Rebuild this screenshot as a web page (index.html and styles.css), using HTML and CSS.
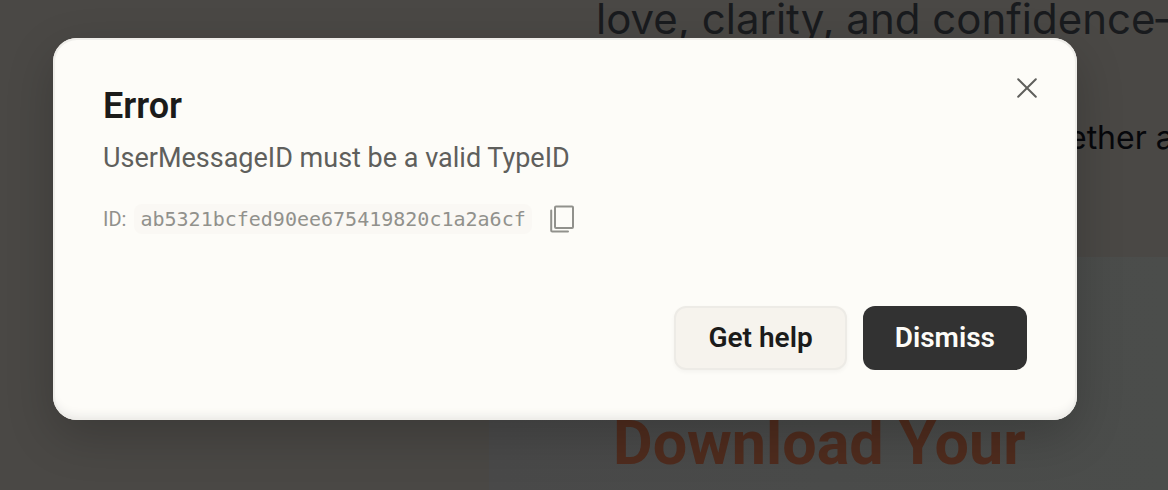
FILE: index.html
```html
<!DOCTYPE html>
<html lang="en">
<head>
<meta charset="utf-8">
<meta name="viewport" content="width=device-width, initial-scale=1">
<title>Error</title>
<link rel="stylesheet" href="styles.css">
</head>
<body>
<div class="page" aria-hidden="true">
  <div class="intro">
    <p class="lead">love, clarity, and confidence—</p>
    <p class="note">together a</p>
  </div>
  <div class="download">
    <h2 class="download-title">Download Your</h2>
  </div>
</div>
<div class="overlay">
  <section class="dialog" role="dialog" aria-modal="true" aria-labelledby="title" aria-describedby="message">
    <header class="header">
      <div class="heading">
        <h1 class="title" id="title">Error</h1>
        <p class="message" id="message">UserMessageID must be a valid TypeID</p>
      </div>
      <button class="icon-button" type="button" aria-label="Close">
        <svg width="20" height="20" viewBox="0 0 20 20" fill="none" stroke="currentColor" stroke-width="2" stroke-linecap="round"><path d="M1.2 1.2 18.8 18.8M18.8 1.2 1.2 18.8"/></svg>
      </button>
    </header>
    <div class="reference">
      <span class="label">ID:</span>
      <code class="code">ab5321bcfed90ee675419820c1a2a6cf</code>
      <button class="icon-button copy" type="button" aria-label="Copy ID">
        <svg width="24" height="28" viewBox="0 0 24 28" fill="none" stroke="currentColor" stroke-width="2" stroke-linecap="round" stroke-linejoin="round"><rect x="5" y="1.5" width="18" height="21.5" rx="1"/><path d="M1.2 5.5V25.5a1 1 0 0 0 1 1H18"/></svg>
      </button>
    </div>
    <footer class="actions">
      <button class="button secondary" type="button">Get help</button>
      <button class="button primary" type="button">Dismiss</button>
    </footer>
  </section>
</div>
</body>
</html>
```
FILE: styles.css
```css
* {
  box-sizing: border-box;
}

body {
  margin: 0;
  min-height: 100vh;
  display: grid;
  overflow: hidden;
  background: #4a4845;
  font-family: Roboto, "Liberation Sans", sans-serif;
}

h1, h2, p {
  margin: 0;
}

.page,
.overlay {
  grid-area: 1 / 1;
  min-width: 0;
}

.page {
  display: flex;
  flex-direction: column;
  gap: 95px;
  overflow: hidden;
  font-family: Inter, "Liberation Sans", sans-serif;
  white-space: nowrap;
}

.intro {
  height: 162px;
}

.lead {
  padding-left: 596px;
  color: #191b1e;
  font-size: 42px;
  line-height: 38px;
}

.note {
  padding: 80px 0 0 1019px;
  color: #06070b;
  font-size: 32px;
  line-height: 40px;
}

.download {
  flex: 1;
  margin-left: 489px;
  padding: 150px 0 0 124px;
  background: linear-gradient(90deg, #494949, #4b4d4b);
}

.download-title {
  color: #4f2c1e;
  font-family: Roboto, "Liberation Sans", sans-serif;
  font-size: 61px;
  line-height: 72px;
}

.overlay {
  position: relative;
  padding: 38px 91px 70px 53px;
}

.dialog {
  padding: 48px 50px 50px;
  border-radius: 24px;
  background: #fdfcf8;
  box-shadow: inset 0 0 0 2px #efeeea, inset 0 -8px 12px -6px #e4e3e0, 0 16px 48px rgb(0 0 0 / 20%);
}

.header {
  display: flex;
  justify-content: space-between;
  align-items: flex-start;
}

.title {
  color: #1b1b1a;
  font-size: 36px;
  font-weight: 600;
  line-height: 40px;
}

.message {
  padding-top: 14px;
  color: #5f5f5c;
  font-size: 27px;
  line-height: 36px;
}

.icon-button {
  display: flex;
  padding: 10px;
  border: 0;
  background: none;
  color: #5f5f5c;
  margin: -18px -20px 0 0;
}

.reference {
  display: flex;
  align-items: center;
  gap: 8px;
  margin-top: 28px;
  color: #91918c;
  font-size: 20px;
}

.code {
  padding: 0 6px;
  border-radius: 8px;
  background: #faf8f4;
  font-family: "DejaVu Sans Mono", monospace;
  font-size: 20px;
  line-height: 30px;
}

.copy {
  margin: 0;
  padding: 0 10px;
  color: #91918c;
}

.actions {
  display: flex;
  justify-content: flex-end;
  gap: 16px;
  margin-top: 72px;
}

.button {
  height: 64px;
  padding: 0 32px;
  border: 0;
  border-radius: 12px;
  font: 600 28px/36px Roboto, "Liberation Sans", sans-serif;
}

.secondary {
  border: 2px solid #edebe6;
  background: #f6f3ed;
  color: #1b1b1a;
  box-shadow: 0 2px 4px rgb(0 0 0 / 4%);
}

.primary {
  background: #323232;
  color: #fdfcf8;
}
```
